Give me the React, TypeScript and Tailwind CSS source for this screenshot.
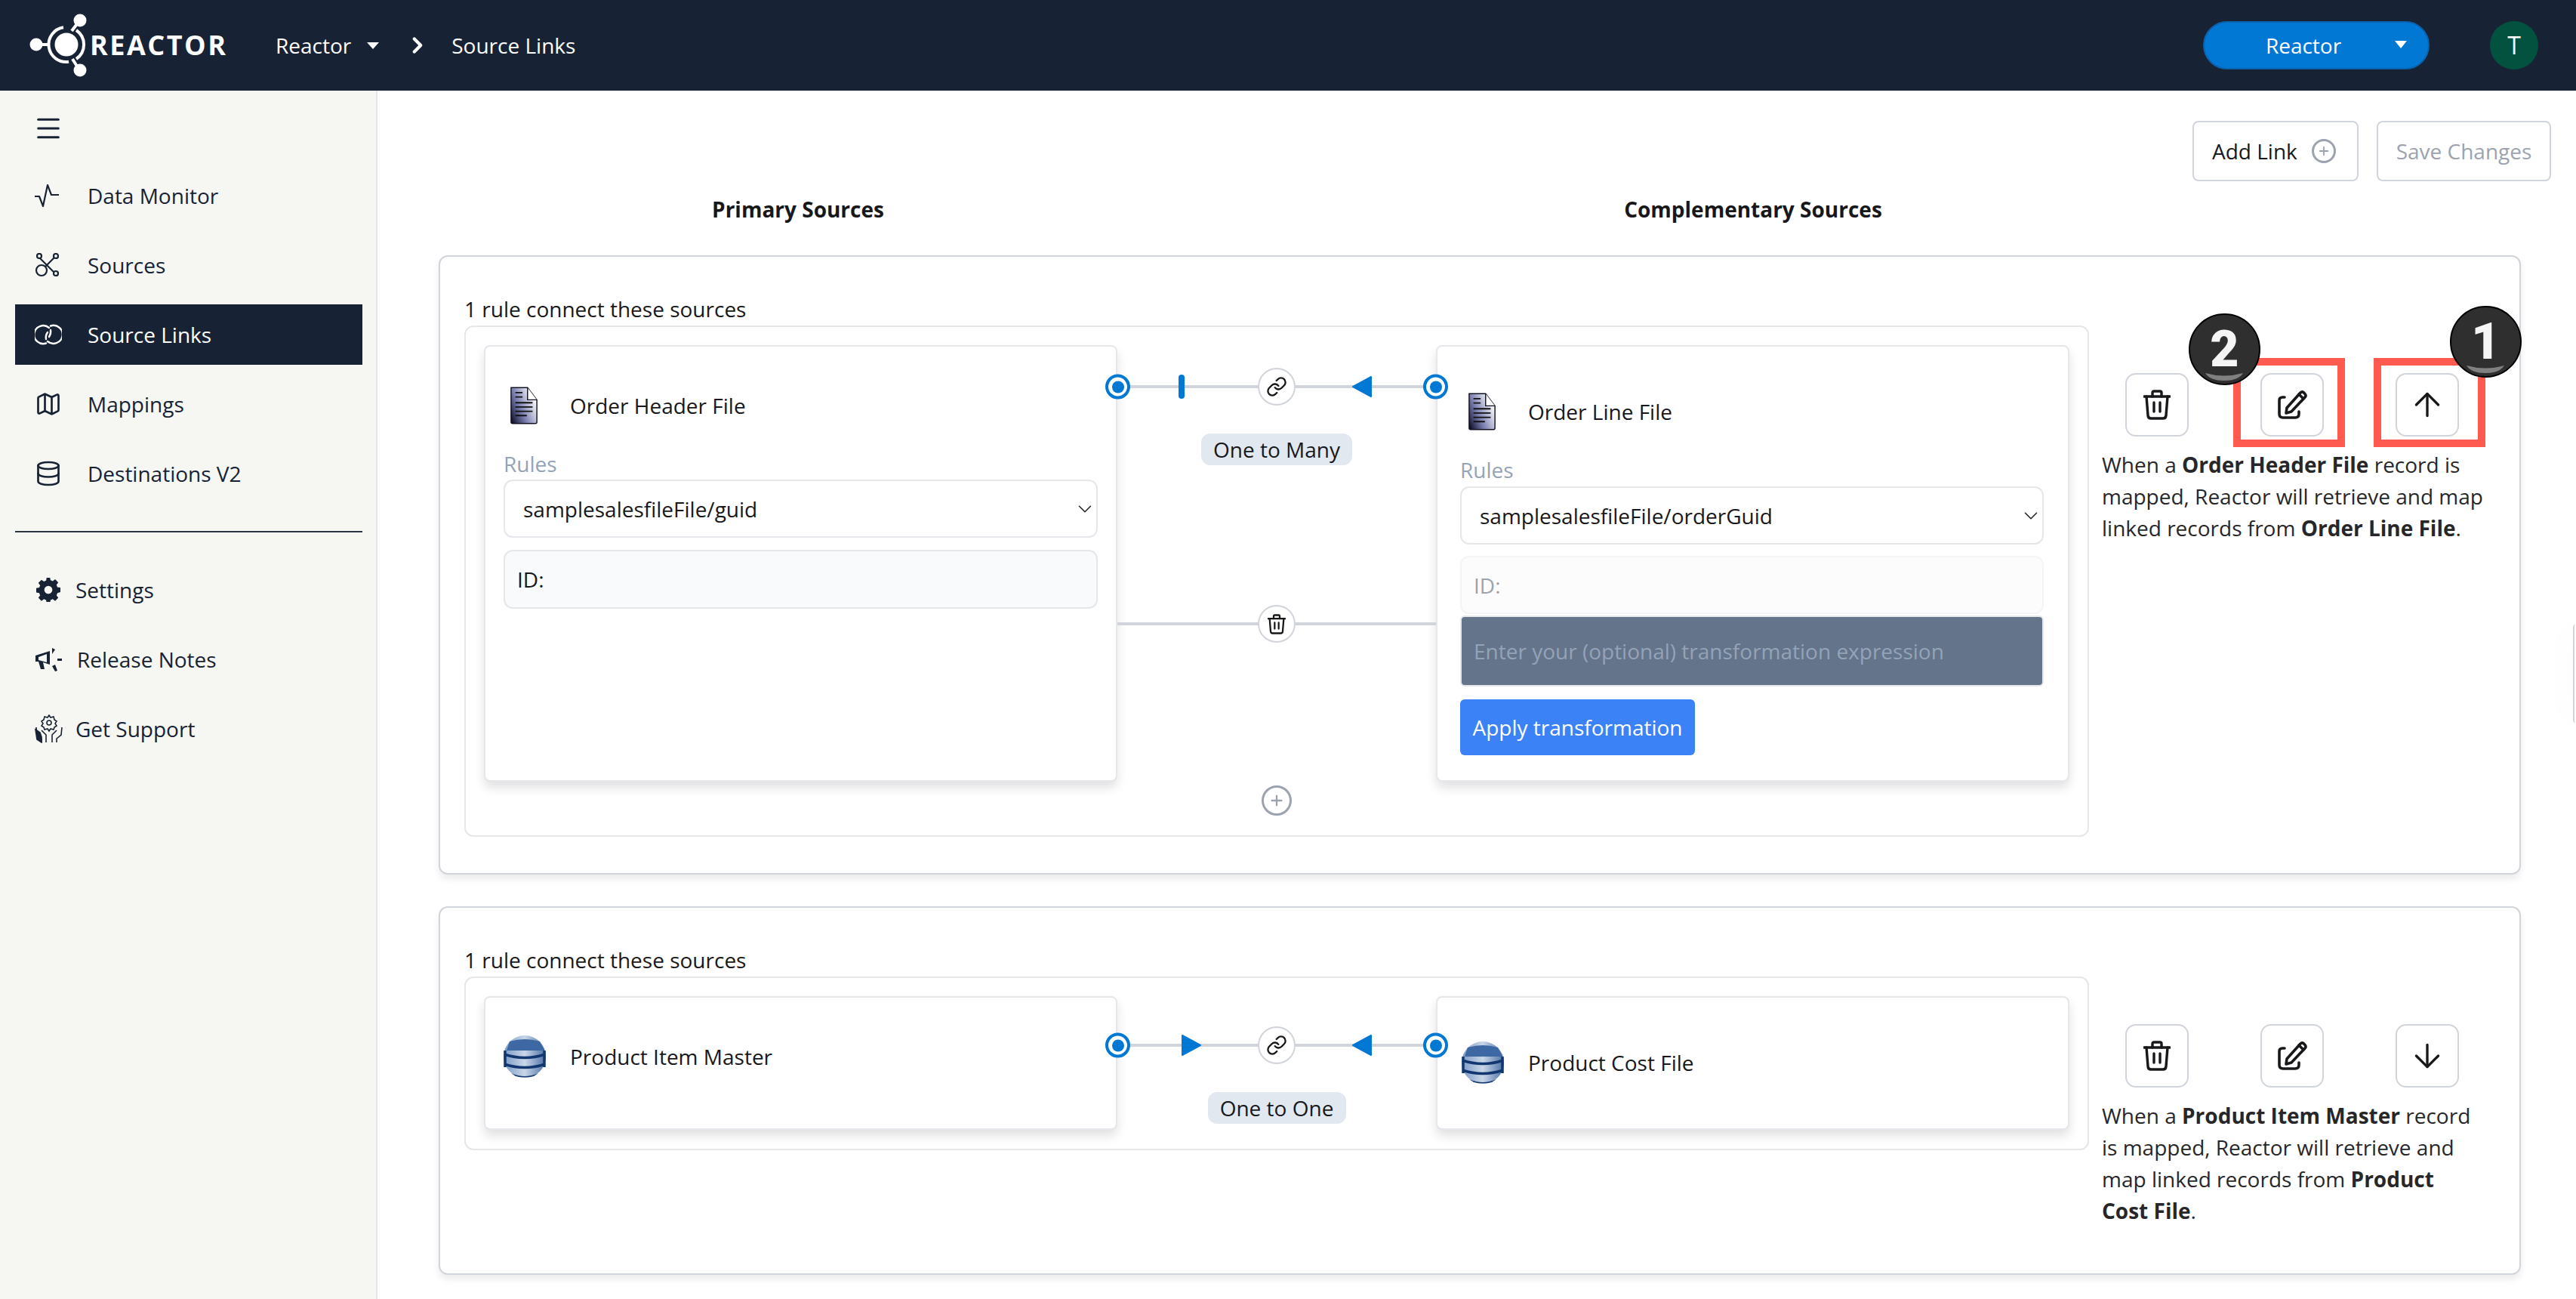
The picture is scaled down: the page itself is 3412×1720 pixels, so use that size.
import { ArrowDown, ArrowUp, ChevronDown, ChevronRight, Database, Link, Map, Menu, Plus } from "lucide-react";
import type { ReactNode } from "react";

const NAVY = "#172335";
const BLUE = "#0278d5";

function Logo() {
  return (
    <svg width="80" height="88" viewBox="0 0 80 88" className="shrink-0">
      <g fill="none" stroke="#fff" strokeWidth="4">
        <path d="M46 20.300 A 23 23 0 0 0 53 65.800" />
        <path d="M63 24 A 23 23 0 0 1 63 62" />
        <path d="M57 25 L66 13" />
        <path d="M58 62 L66 75" />
        <path d="M12 43 H27" />
      </g>
      <circle cx="50" cy="43" r="15.500" fill="#fff" />
      <circle cx="10" cy="43" r="8.500" fill="#fff" />
      <circle cx="68" cy="11" r="8.500" fill="#fff" />
      <circle cx="68" cy="77" r="8.500" fill="#fff" />
    </svg>
  );
}

function Pulse() {
  return (
    <svg width="32" height="32" viewBox="0 0 32 32" fill="none" stroke={NAVY} strokeWidth="2.200" strokeLinejoin="round">
      <path d="M0 17 H6 L11 30 L17 2 L22 15 H32" />
    </svg>
  );
}

function SourcesIcon() {
  return (
    <svg width="32" height="32" viewBox="0 0 32 32" fill="none" stroke={NAVY} strokeWidth="2.200">
      <circle cx="6" cy="4" r="3" />
      <circle cx="28" cy="4" r="3" />
      <circle cx="28" cy="27" r="3" />
      <circle cx="9" cy="23" r="7" />
      <path d="M7 7 L25 25 M26 6 L14 18" />
    </svg>
  );
}

function LinksIcon() {
  return (
    <svg width="36" height="28" viewBox="0 0 36 28" fill="none" stroke="#fff" strokeWidth="2.400" strokeLinecap="round">
      <path d="M15 25.500 A 12 12 0 1 1 19 5" />
      <path d="M17 11 A 12 12 0 0 0 15 20" />
      <path d="M21 2.500 A 12 12 0 1 1 17 23" />
      <path d="M19 17 A 12 12 0 0 0 21 8" />
    </svg>
  );
}

function Gear() {
  return (
    <svg width="32" height="32" viewBox="0 0 24 24" fill={NAVY} className="ml-[2px]">
      <path d="M24 14.200v-4.400l-3-.5a9 9 0 0 0-.9-2.200l1.800-2.500-3.100-3.100-2.500 1.800a9 9 0 0 0-2.100-.9L13.700 0H10.300l-.5 2.900a9 9 0 0 0-2.100.9L5.200 2 2.100 5.100l1.800 2.500a9 9 0 0 0-.9 2.200l-3 .5v4.400l3 .5a9 9 0 0 0 .9 2.200l-1.800 2.500 3.100 3.100 2.500-1.800a9 9 0 0 0 2.100.9l.5 2.900h3.400l.5-2.900a9 9 0 0 0 2.100-.9l2.500 1.800 3.100-3.100-1.800-2.500a9 9 0 0 0 .9-2.200zM12 16a4 4 0 1 1 0-8 4 4 0 0 1 0 8z" />
    </svg>
  );
}

function Horn() {
  return (
    <svg width="36" height="34" viewBox="0 0 36 34" fill={NAVY}>
      <path d="M1 12 L20 6 V24 L11 21 L13 30 H8 L5 20 H1 Z M5 14 V18 L16 21 V10 Z" fillRule="evenodd" />
      <path d="M23 2 L27 4 L23 10 Z M30 16 H36 V19 H30 Z M23 26 L27 24 L30 32 L27 33 Z" />
    </svg>
  );
}

function SupportIcon() {
  return (
    <svg width="38" height="38" viewBox="0 0 38 38" fill="none" stroke={NAVY} strokeWidth="1.600">
      <circle cx="19" cy="11" r="3" />
      <path d="M19 1 L21 4 L25 3 L26 7 L29 9 L27 12 L29 15 L26 17 L25 20 L21 19 L19 22 L17 19 L13 20 L12 17 L9 15 L11 12 L9 9 L12 7 L13 3 L17 4 Z" />
      <path d="M2 17 L3 27 L9 32 V37 M36 17 L35 27 L29 32 V37 M9 21 L15 27 V37 M29 21 L23 27 V37" />
      <path d="M1 20 L3 33 L9 37 V30 L7 24 Z" fill={NAVY} />
    </svg>
  );
}

function TrashIcon({ w = 36, h = 40 }: { w?: number; h?: number }) {
  return (
    <svg width={w} height={h} viewBox="0 0 36 40" fill="none" stroke="#18181b" strokeWidth="3.400" strokeLinecap="round" strokeLinejoin="round">
      <path d="M1 9 H35" />
      <path d="M12 9 V4 Q12 2 14 2 H22 Q24 2 24 4 V9" />
      <path d="M4 9 L6 34 Q6.300 38 10 38 H26 Q29.700 38 30 34 L32 9" />
      <path d="M14 17 V29 M22 17 V29" />
    </svg>
  );
}

function EditIcon() {
  return (
    <svg width="40" height="40" viewBox="0 0 40 40" fill="none" stroke="#18181b" strokeWidth="3.600" strokeLinecap="round" strokeLinejoin="round">
      <path d="M10 10 H7 Q3 10 3 14 V32 Q3 37 8 37 H24 Q29 37 29 32 V29" />
      <path d="M13 24 L31 4 Q33 2 35.500 4 L37 5.500 Q39 8 37 10 L19 29 L12 31 Z" />
      <path d="M29 6 L35 12" />
    </svg>
  );
}

function DocIcon() {
  return (
    <svg width="38" height="50" viewBox="0 0 40 52">
      <defs>
        <linearGradient id="docfill" x1="0" y1="1" x2="1" y2="0.400">
          <stop offset="0" stopColor="#05051e" />
          <stop offset="0.450" stopColor="#7a7fb0" />
          <stop offset="1" stopColor="#ffffff" />
        </linearGradient>
      </defs>
      <path d="M2 1 H25 L38 18 V49 Q38 51 36 51 H4 Q2 51 2 49 Z" fill="url(#docfill)" stroke="#101020" strokeWidth="1.500" />
      <path d="M25 1 V18 H38" fill="#fff" stroke="#101020" strokeWidth="1.500" />
      <path d="M8 8 H18 M8 14 H18 M8 22 H32 M8 28 H32 M8 34 H32 M8 40 H24" stroke="#111" strokeWidth="2" />
    </svg>
  );
}

function DbIcon() {
  return (
    <svg width="56" height="56" viewBox="0 0 56 56">
      <defs>
        <linearGradient id="dbfill" x1="0" y1="0" x2="1" y2="0">
          <stop offset="0" stopColor="#7b9ac4" />
          <stop offset="0.500" stopColor="#c9d6e8" />
          <stop offset="1" stopColor="#4a6fa5" />
        </linearGradient>
      </defs>
      <circle cx="28" cy="28" r="28" fill="url(#dbfill)" />
      <path d="M8 8 Q28 2 48 8 L54 20 H4 Z" fill="#3e68a3" />
      <path d="M1 25 Q28 34 55 25 M1 38 Q28 47 55 38 M2 20 V42 M54 20 V42" stroke="#12366f" strokeWidth="3.500" fill="none" />
      <path d="M10 50 Q28 58 46 50 L40 54 Q28 57 16 54 Z" fill="#12366f" />
    </svg>
  );
}

function NavItem({ icon, label, active, w }: { icon: ReactNode; label: string; active?: boolean; w: string }) {
  return (
    <div className={active ? "flex items-center h-[80px] bg-[#172335] text-white pl-[26px]" : "flex items-center h-[80px] text-[#172335] pl-[26px]"}>
      <span className={"flex " + w}>{icon}</span>
      <span>{label}</span>
    </div>
  );
}

function Sidebar() {
  return (
    <aside className="w-[500px] shrink-0 bg-[#f6f7f2] border-r-2 border-[#e5e7eb] pl-[20px] pr-[18px] text-[28px]">
      <div className="h-[100px] flex items-center pl-[24px]">
        <Menu size={40} strokeWidth={1.800} color={NAVY} />
      </div>
      <div className="flex flex-col gap-[12px] -mt-[1px]">
        <NavItem w="w-[70px]" icon={<Pulse />} label="Data Monitor" />
        <NavItem w="w-[70px]" icon={<SourcesIcon />} label="Sources" />
        <NavItem w="w-[70px]" active icon={<LinksIcon />} label="Source Links" />
        <NavItem w="w-[70px]" icon={<Map size={36} strokeWidth={1.800} />} label="Mappings" />
        <NavItem w="w-[70px]" icon={<Database size={36} strokeWidth={1.800} />} label="Destinations V2" />
      </div>
      <div className="h-[2px] bg-[#2b3441] mt-[36px] mb-[36px]" />
      <div className="flex flex-col gap-[12px]">
        <NavItem w="w-[54px]" icon={<Gear />} label="Settings" />
        <NavItem w="w-[56px]" icon={<Horn />} label="Release Notes" />
        <NavItem w="w-[54px]" icon={<SupportIcon />} label="Get Support" />
      </div>
    </aside>
  );
}

function Header() {
  return (
    <header className="h-[120px] shrink-0 bg-[#172335] flex items-center text-white text-[28px] pl-[38px]">
      <Logo />
      <span className="text-[36px] font-bold tracking-[2.500px] ml-[1px] w-[246px]">REACTOR</span>
      <span>Reactor</span>
      <span className="ml-[21px] w-0 h-0 border-x-[8px] border-x-transparent border-t-[9px] border-t-white" />
      <ChevronRight size={34} strokeWidth={3} className="ml-[34px]" />
      <span className="ml-[28px]">Source Links</span>
      <div className="ml-auto relative w-[300px] h-[64px] rounded-full bg-[#0278d5] border-2 border-[#0a62ad] flex items-center justify-center pr-[34px]">
        Reactor
        <span className="absolute right-[28px] top-[24px] w-0 h-0 border-x-[8px] border-x-transparent border-t-[10px] border-t-white" />
      </div>
      <div className="ml-[80px] mr-[50px] w-[64px] h-[64px] rounded-full bg-[#03513f] flex items-center justify-center text-[32px]">T</div>
    </header>
  );
}

function Node({ left }: { left: boolean }) {
  return (
    <span className={left ? "absolute -left-[16px] top-1/2 -translate-y-1/2 w-[33px] h-[33px] rounded-full bg-white border-[4px] border-[#0278d5] flex items-center justify-center" : "absolute -right-[16px] top-1/2 -translate-y-1/2 w-[33px] h-[33px] rounded-full bg-white border-[4px] border-[#0278d5] flex items-center justify-center"}>
      <span className="w-[16px] h-[16px] rounded-full bg-[#0278d5]" />
    </span>
  );
}

function RoundBtn({ children }: { children: ReactNode }) {
  return (
    <span className="absolute left-1/2 top-1/2 -translate-x-1/2 -translate-y-1/2 w-[50px] h-[50px] rounded-full bg-white border-2 border-[#d1d5db] flex items-center justify-center">
      {children}
    </span>
  );
}

function Triangle({ dir, className }: { dir: "left" | "right"; className: string }) {
  return (
    <svg width="26" height="30" viewBox="0 0 26 30" className={className} fill={BLUE} stroke={BLUE} strokeWidth="2" strokeLinejoin="round">
      {dir === "left" ? <path d="M25 2 V28 L1 15 Z" /> : <path d="M1 2 V28 L25 15 Z" />}
    </svg>
  );
}

function Connector({ one, label, pillW, top, children }: { one: boolean; label: string; pillW: string; top: string; children?: ReactNode }) {
  return (
    <div className="w-[422px] shrink-0 relative">
      <div className={"relative h-[4px] bg-[#d1d5db] " + top}>
        <Node left />
        <Node left={false} />
        {one ? (
          <span className="absolute left-[81px] top-1/2 -translate-y-1/2 w-[8px] h-[32px] rounded-full bg-[#0278d5]" />
        ) : (
          <Triangle dir="right" className="absolute left-[85px] -top-[13px]" />
        )}
        <Triangle dir="left" className="absolute left-[311px] -top-[13px]" />
        <RoundBtn>
          <Link size={28} strokeWidth={2} color="#18181b" />
        </RoundBtn>
      </div>
      <div className="flex justify-center mt-[60px]">
        <span className={"h-[42px] flex items-center justify-center rounded-[12px] bg-[#e2e8f0] text-[#18181b] text-[28px] " + pillW}>{label}</span>
      </div>
      {children}
    </div>
  );
}

function Select({ value }: { value: string }) {
  return (
    <div className="h-[77px] rounded-[12px] border-2 border-[#e5e7eb] bg-white flex items-center justify-between pl-[24px]">
      <span>{value}</span>
      <ChevronDown size={30} strokeWidth={1.300} color="#27272a" />
    </div>
  );
}

function ActionBtn({ children }: { children: ReactNode }) {
  return (
    <span className="w-[84px] h-[84px] rounded-[14px] border-2 border-[#d1d5db] bg-white flex items-center justify-center">
      {children}
    </span>
  );
}

function Annotation({ n, frame, badge }: { n: string; frame: string; badge: string }) {
  return (
    <>
      <span className={"absolute w-[148px] h-[118px] border-[10px] border-[#ff5a4f] " + frame} />
      <span className={"absolute w-[95px] h-[95px] rounded-full bg-[#2f2f2f] border-2 border-black overflow-hidden flex items-center justify-center text-[#f5f5f5] text-[66px] leading-none font-black font-['Roboto',sans-serif] " + badge}>
        {n}
        <svg width="50" height="10" viewBox="0 0 50 10" className="absolute left-[20px] bottom-[4px]">
          <path d="M0 0 Q25 7 50 0 Q44 10 25 10 Q6 10 0 0 Z" fill="#808080" />
        </svg>
      </span>
    </>
  );
}

function Actions({ last, text, annotate }: { last: ReactNode; text: ReactNode; annotate?: boolean }) {
  return (
    <div className="w-[572px] shrink-0 pl-[17px] pt-[105px]">
      <div className="relative flex items-center pl-[31px] gap-[95px]">
        <ActionBtn>
          <TrashIcon />
        </ActionBtn>
        <ActionBtn>
          <EditIcon />
        </ActionBtn>
        <ActionBtn>{last}</ActionBtn>
        {annotate && (
          <>
            <Annotation n="2" frame="left-[174px] -top-[20px]" badge="left-[115px] -top-[79px]" />
            <Annotation n="1" frame="left-[360px] -top-[20px]" badge="left-[461px] -top-[89px]" />
          </>
        )}
      </div>
      <p className="mt-[16px] w-[506px] leading-[42px] text-[#27272a]">{text}</p>
    </div>
  );
}

function SourceCard({ icon, title, className, head, titleW, children }: { icon: ReactNode; title: string; className: string; head: string; titleW: string; children?: ReactNode }) {
  return (
    <div className={"w-[839px] shrink-0 rounded-[8px] border-2 border-[#e5e7eb] bg-white shadow-[0_8px_14px_rgba(0,0,0,0.12)] " + className}>
      <div className={"flex items-center h-[56px] " + head}>
        <span className={"flex " + titleW}>{icon}</span>
        <span>{title}</span>
      </div>
      {children}
    </div>
  );
}

function Rule({ children, actions, height }: { children: ReactNode; actions: ReactNode; height: string }) {
  return (
    <section className={"rounded-[12px] border-2 border-[#d1d5db] bg-white shadow-[0_6px_10px_rgba(0,0,0,0.08)] pl-[32px] pt-[49px] " + height}>
      <div className="flex">
        <div className="w-[2152px] shrink-0">
          <div className="h-[40px] mb-[2px] flex items-center">1 rule connect these sources</div>
          {children}
        </div>
        {actions}
      </div>
    </section>
  );
}

export default function App() {
  return (
    <div className="w-[3412px] h-[1720px] overflow-hidden flex flex-col bg-white font-['Open_Sans',sans-serif] text-[#18181b] text-[28px]">
      <Header />
      <div className="flex flex-1 min-h-0">
        <Sidebar />
        <main className="flex-1 min-w-0 pl-[81px] pr-[73px] relative">
          <div className="flex justify-end gap-[24px] pt-[40px] -mr-[40px]">
            <span className="w-[220px] h-[80px] pl-[24px] pr-[28px] rounded-[8px] border-2 border-[#d1d5db] flex items-center justify-between">
              Add Link
              <span className="w-[32px] h-[32px] rounded-full border-[3px] border-[#9ca3af] flex items-center justify-center">
                <Plus size={18} strokeWidth={2.500} color="#9ca3af" />
              </span>
            </span>
            <span className="w-[231px] h-[80px] rounded-[8px] border-2 border-[#d1d5db] flex items-center justify-center text-[#9ca3af]">Save Changes</span>
          </div>
          <div className="flex font-bold h-[74px] mb-[24px] items-center">
            <span className="w-[952px] text-center">Primary Sources</span>
            <span className="w-[1578px] text-center">Complementary Sources</span>
          </div>

          <Rule
            height="h-[820px]"
            actions={
              <Actions
                annotate
                last={<ArrowUp size={50} strokeWidth={1.600} color="#18181b" />}
                text={
                  <>
                    When a <b>Order Header File</b> record is mapped, Reactor will retrieve and map linked records from <b>Order Line File</b>.
                  </>
                }
              />
            }
          >
            <div className="rounded-[12px] border-2 border-[#e5e7eb] pt-[24px] pl-[24px] h-[677px]">
              <div className="flex h-[578px]">
                <SourceCard icon={<span className="pl-[8px]"><DocIcon /></span>} title="Order Header File" titleW="w-[88px]" className="h-[578px] px-[24px]" head="mt-[50px]">
                  <div className="mt-[29px] mb-[1px] text-[#94a3b8] leading-[40px]">Rules</div>
                  <Select value="samplesalesfileFile/guid" />
                  <div className="mt-[16px] h-[78px] rounded-[12px] border-2 border-[#e5e7eb] bg-[#f9fafb] flex items-center pl-[16px]">ID:</div>
                </SourceCard>
                <Connector one label="One to Many" pillW="w-[200px]" top="mt-[53px]">
                  <div className="absolute left-0 right-0 top-[367px] h-[4px] bg-[#d1d5db]">
                    <RoundBtn>
                      <TrashIcon w={24} h={27} />
                    </RoundBtn>
                  </div>
                </Connector>
                <SourceCard icon={<span className="pl-[10px]"><DocIcon /></span>} title="Order Line File" titleW="w-[90px]" className="h-[578px] pl-[30px] pr-[32px]" head="mt-[58px]">
                  <div className="mt-[29px] mb-[2px] text-[#94a3b8] leading-[40px]">Rules</div>
                  <Select value="samplesalesfileFile/orderGuid" />
                  <div className="mt-[15px] h-[77px] rounded-[12px] border-2 border-[#f3f4f6] bg-[#fcfcfc] flex items-center pl-[16px] text-[#9ca3af]">ID:</div>
                  <div className="mt-[2px] h-[94px] rounded-[6px] border-2 border-[#e5e7eb] bg-[#64748b] flex items-center pl-[16px] text-[#94a3b8]">
                    Enter your (optional) transformation expression
                  </div>
                  <button className="mt-[17px] h-[74px] w-[311px] rounded-[6px] bg-[#3b82f6] text-white flex items-center justify-center">Apply transformation</button>
                </SourceCard>
              </div>
              <div className="flex justify-center w-[2100px] pt-[5px]">
                <span className="w-[40px] h-[40px] rounded-full border-[3px] border-[#9ca3af] flex items-center justify-center">
                  <Plus size={22} strokeWidth={2.500} color="#9ca3af" />
                </span>
              </div>
            </div>
          </Rule>

          <div className="h-[42px]" />

          <Rule
            height="h-[488px]"
            actions={
              <Actions
                last={<ArrowDown size={50} strokeWidth={1.600} color="#18181b" />}
                text={
                  <>
                    When a <b>Product Item Master</b> record is mapped, Reactor will retrieve and map linked records from <b>Product Cost File</b>.
                  </>
                }
              />
            }
          >
            <div className="rounded-[12px] border-2 border-[#e5e7eb] pt-[24px] pl-[24px] h-[230px]">
              <div className="flex h-[177px]">
                <SourceCard icon={<DbIcon />} title="Product Item Master" titleW="w-[88px]" className="h-[177px] px-[24px]" head="mt-[50px]" />
                <Connector one={false} label="One to One" pillW="w-[183px]" top="mt-[63px]" />
                <SourceCard icon={<span className="pl-[2px]"><DbIcon /></span>} title="Product Cost File" titleW="w-[90px]" className="h-[177px] pl-[30px] pr-[32px]" head="mt-[58px]" />
              </div>
            </div>
          </Rule>

          {/* drawer tab peeking in at the window edge */}
          <span className="absolute right-0 top-[707px] w-[4px] h-[130px] rounded-l-[10px] border-l-2 border-[#d1d5db] bg-white shadow-[0_0_40px_rgba(0,0,0,0.1)]" />
        </main>
      </div>
    </div>
  );
}
